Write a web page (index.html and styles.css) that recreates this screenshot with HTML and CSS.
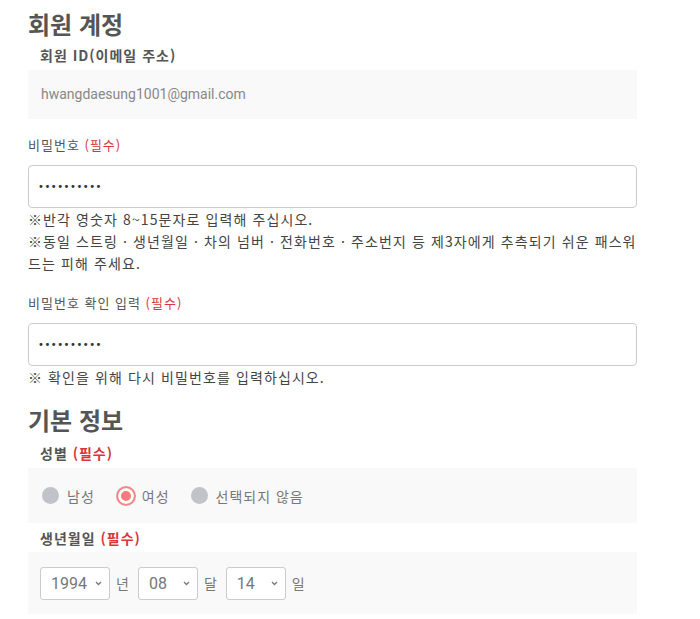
FILE: index.html
```html
<!DOCTYPE html>
<html lang="ko">
<head>
<meta charset="utf-8">
<title>회원 계정</title>
<link rel="stylesheet" href="styles.css">
</head>
<body>
<main class="form">
  <h2 class="section-title">회원 계정</h2>
  <div class="label-strong">회원 ID(이메일 주소)</div>
  <div class="panel panel-readonly">hwangdaesung1001@gmail.com</div>

  <label class="label label-first">비밀번호 <span class="req">(필수)</span></label>
  <input class="text-input" type="password" value="abcdefghij">
  <p class="hint">※반각 영숫자 8~15문자로 입력해 주십시오.<br>※동일 스트링 · 생년월일 · 차의 넘버 · 전화번호 · 주소번지 등 제3자에게 추측되기 쉬운 패스워드는 피해 주세요.</p>

  <label class="label label-second">비밀번호 확인 입력 <span class="req">(필수)</span></label>
  <input class="text-input" type="password" value="abcdefghij">
  <p class="hint">※ 확인을 위해 다시 비밀번호를 입력하십시오.</p>

  <h2 class="section-title section-second">기본 정보</h2>
  <div class="label-strong label-gender">성별 <span class="req">(필수)</span></div>
  <div class="panel panel-radios">
    <span class="radio"><span class="dot"></span>남성</span>
    <span class="radio"><span class="dot dot-on"></span>여성</span>
    <span class="radio"><span class="dot"></span>선택되지 않음</span>
  </div>
  <div class="label-strong label-birth">생년월일 <span class="req">(필수)</span></div>
  <div class="panel panel-date">
    <span class="select select-year">1994<svg class="chev" viewBox="0 0 7 5" width="7" height="5"><path d="M1 1l2.5 2.5L6 1" fill="none" stroke="#777" stroke-width="1.3"/></svg></span>
    <span class="unit">년</span>
    <span class="select">08<svg class="chev" viewBox="0 0 7 5" width="7" height="5"><path d="M1 1l2.5 2.5L6 1" fill="none" stroke="#777" stroke-width="1.3"/></svg></span>
    <span class="unit">달</span>
    <span class="select">14<svg class="chev" viewBox="0 0 7 5" width="7" height="5"><path d="M1 1l2.5 2.5L6 1" fill="none" stroke="#777" stroke-width="1.3"/></svg></span>
    <span class="unit">일</span>
  </div>
</main>
</body>
</html>
```
FILE: styles.css
```css
html, body {
  margin: 0;
  padding: 0;
  background: #fff;
}
body {
  font-family: "Noto Sans CJK KR", sans-serif;
  color: #555;
}
.form {
  width: 609px;
  margin-left: 28px;
  padding-top: 8px;
  display: flex;
  flex-direction: column;
  align-items: stretch;
}
.section-title {
  margin: 0;
  font-family: "Noto Sans CJK KR", sans-serif;
  font-size: 24px;
  line-height: 32px;
  font-weight: 700;
  color: #555;
}
.section-second {
  margin-top: 16px;
}
.label-strong {
  margin-top: 4px;
  padding-left: 12px;
  font-family: "Noto Sans CJK KR", sans-serif;
  font-size: 14px;
  font-weight: 700;
  line-height: 22px;
  letter-spacing: 1px;
  color: #555;
}
.label-gender { margin-top: 6px; }
.label-birth { margin-top: 4px; }
.req { color: #d9363e; }
.panel {
  background: #f9f9f9;
  margin-top: 4px;
}
.panel-readonly {
  height: 49px;
  line-height: 49px;
  padding: 0 13px;
  font-family: Roboto, "Noto Sans", sans-serif;
  font-size: 14px;
  color: #888;
}
.label {
  font-family: "Noto Sans CJK KR", sans-serif;
  font-size: 13px;
  line-height: 22px;
  letter-spacing: 1px;
  color: #555;
}
.label-first { margin-top: 15px; }
.label-second { margin-top: 18px; }
.text-input {
  box-sizing: border-box;
  height: 43px;
  margin: 9px 0 0;
  padding: 0 9px;
  border: 1px solid #ccc;
  border-radius: 4px;
  font-family: "DejaVu Sans", sans-serif;
  font-size: 10px;
  letter-spacing: 0.5px;
  color: #333;
  background: #fff;
  outline: none;
}
.hint {
  margin: 0;
  font-family: "Noto Sans CJK KR", sans-serif;
  font-size: 14px;
  line-height: 22px;
  letter-spacing: 1.1px;
  color: #444;
}
.panel-radios {
  height: 55px;
  padding-left: 14px;
  display: flex;
  align-items: center;
  gap: 21px;
}
.radio {
  display: flex;
  align-items: center;
  gap: 8px;
  font-family: "Noto Sans CJK KR", sans-serif;
  font-size: 14px;
  letter-spacing: 1px;
  color: #777;
}
.dot {
  width: 17px;
  height: 17px;
  border-radius: 50%;
  background: #c0c4c8;
}
.dot-on {
  box-sizing: border-box;
  width: 20px;
  height: 20px;
  margin-right: -2px;
  background: #f47c7c;
  border: 2px solid #f08a8a;
  box-shadow: inset 0 0 0 3px #fff;
}
.panel-date {
  height: 62px;
  margin-top: 3px;
  padding: 0 12px;
  display: flex;
  align-items: center;
}
.select {
  box-sizing: border-box;
  width: 60px;
  height: 33px;
  padding: 0 7px 0 10px;
  border: 1px solid #ccc;
  border-radius: 3px;
  background: #fff;
  display: flex;
  align-items: center;
  justify-content: space-between;
  font-family: Roboto, sans-serif;
  font-size: 16px;
  color: #777;
}
.select-year { width: 70px; }
.chev { flex: none; }
.unit {
  margin: 0 9px 0 6px;
  font-family: "Noto Sans CJK KR", sans-serif;
  font-size: 14px;
  color: #777;
}
```
